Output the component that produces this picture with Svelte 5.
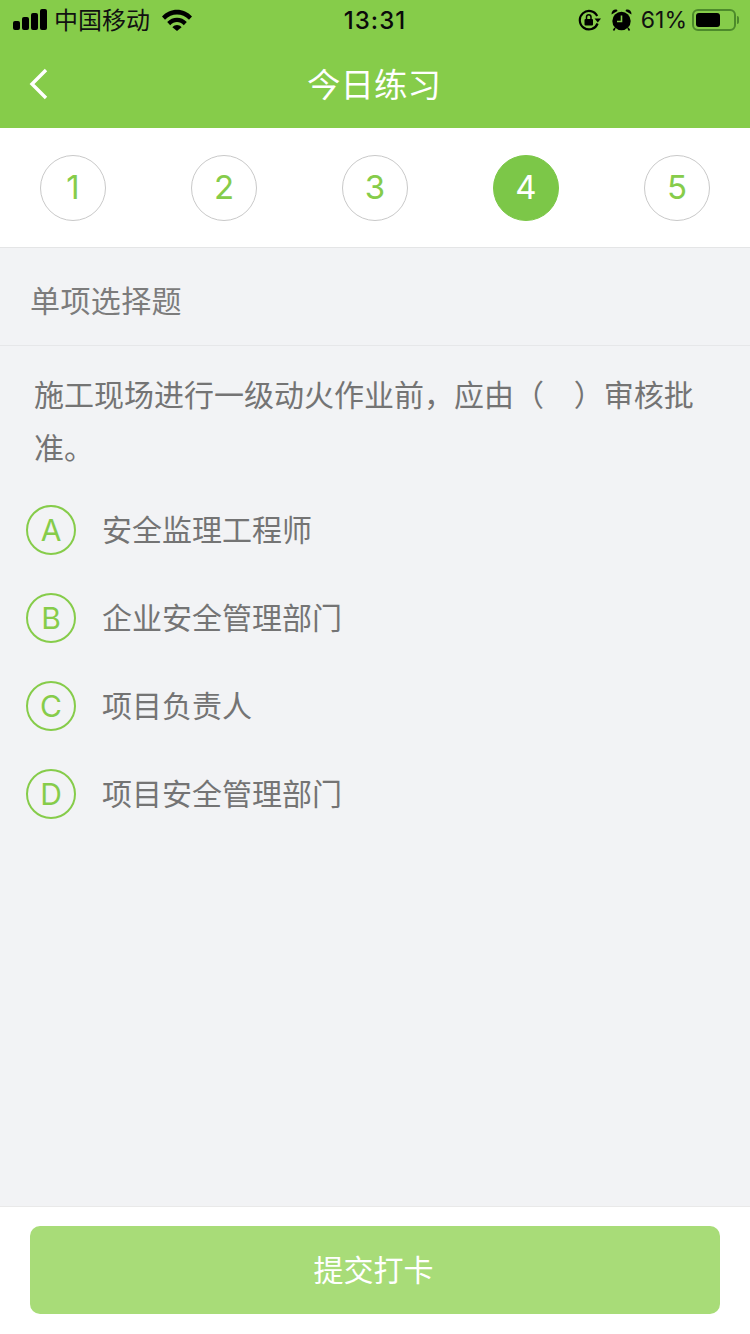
<script>
  const steps = [1, 2, 3, 4, 5];
  const current = 4;
  const options = [
    { key: 'A', text: '安全监理工程师' },
    { key: 'B', text: '企业安全管理部门' },
    { key: 'C', text: '项目负责人' },
    { key: 'D', text: '项目安全管理部门' }
  ];
</script>

<div class="page">
  <header class="header">
    <div class="status">
      <div class="status-left">
        <div class="signal">
          <i style="height: 9px"></i>
          <i style="height: 13px"></i>
          <i style="height: 17px"></i>
          <i style="height: 21px"></i>
        </div>
        <span class="carrier">中国移动</span>
        <svg class="wifi" width="30" height="22" viewBox="0 0 30 22">
          <path d="M0 7.5C8 -1.5 22 -1.5 30 7.5L27 10.8C20.5 3.6 9.5 3.6 3 10.8Z" fill="#000" />
          <path d="M5.2 13C10.5 7.2 19.5 7.2 24.8 13L21.8 16.2C17.8 12 12.2 12 8.2 16.2Z" fill="#000" />
          <path d="M10.4 18.2C13 15.4 17 15.4 19.6 18.2L15 22Z" fill="#000" />
        </svg>
      </div>
      <span class="time">13:31</span>
      <div class="status-right">
        <svg width="23" height="22" viewBox="0 0 23 22">
          <path d="M19.2 7A9.2 9.2 0 1 0 19.6 14.5" fill="none" stroke="#000" stroke-width="2.2" />
          <path d="M16.5 9.5H23L19.8 13.5Z" fill="#000" />
          <rect x="6.5" y="10" width="8.5" height="6.5" rx="1" fill="#000" />
          <path d="M8.5 10V8a2.2 2.2 0 0 1 4.5 0V10" fill="none" stroke="#000" stroke-width="1.5" />
        </svg>
        <svg class="alarm" width="21" height="22" viewBox="0 0 21 22">
          <circle cx="10.5" cy="12" r="9.2" fill="#000" />
          <path d="M10.5 6.5V12.5H6" fill="none" stroke="#86cc4a" stroke-width="1.6" />
          <path d="M0.5 5.5C0.5 2 3 0 6 0.8L6.5 2Z" fill="#000" />
          <path d="M20.5 5.5C20.5 2 18 0 15 0.8L14.5 2Z" fill="#000" />
          <path d="M4 19L2.5 21.5M17 19L18.5 21.5" stroke="#000" stroke-width="1.6" />
        </svg>
        <span class="percent">61%</span>
        <div class="battery">
          <div class="battery-body"><div class="battery-level"></div></div>
          <div class="battery-cap"></div>
        </div>
      </div>
    </div>
    <div class="nav">
      <svg class="back" width="20" height="32" viewBox="0 0 20 32">
        <path d="M17 2L3 16L17 30" fill="none" stroke="#fff" stroke-width="3.4" />
      </svg>
      <h1 class="title">今日练习</h1>
    </div>
  </header>

  <div class="steps">
    {#each steps as step}
      <div class="step" class:active={step === current}>{step}</div>
    {/each}
  </div>

  <main class="content">
    <div class="type">单项选择题</div>
    <p class="question">施工现场进行一级动火作业前，应由（&nbsp;&nbsp;&nbsp;）审核批准。</p>
    <ul class="options">
      {#each options as option}
        <li class="option">
          <span class="key">{option.key}</span>
          <span class="text">{option.text}</span>
        </li>
      {/each}
    </ul>
  </main>

  <footer class="footer">
    <button class="submit">提交打卡</button>
  </footer>
</div>

<style>
  :global(body) {
    margin: 0;
  }

  .page {
    width: 750px;
    height: 1334px;
    display: flex;
    flex-direction: column;
    background: #f2f3f5;
    font-family: 'Inter', 'Noto Sans CJK SC', sans-serif;
    overflow: hidden;
  }

  .header {
    height: 128px;
    background: #86cc4a;
    flex: none;
  }

  .status {
    height: 40px;
    display: flex;
    align-items: center;
    justify-content: space-between;
    padding: 0 11px 0 13px;
    position: relative;
    color: #000;
  }

  .status-left,
  .status-right {
    display: flex;
    align-items: center;
  }

  .signal {
    display: flex;
    align-items: flex-end;
    gap: 2px;
    height: 21px;
    margin-top: -1px;
  }

  .signal i {
    display: block;
    width: 7px;
    background: #000;
    border-radius: 2px;
  }

  .carrier {
    font-size: 24px;
    margin-left: 7px;
    padding-bottom: 4px;
    color: #111;
  }

  .wifi {
    margin-left: 12px;
  }

  .time {
    position: absolute;
    left: 0;
    right: 0;
    text-align: center;
    font-size: 24px;
    font-weight: 500;
    letter-spacing: 1px;
    color: #0a0a0a;
    pointer-events: none;
  }

  .alarm {
    margin-left: 10px;
  }

  .percent {
    font-size: 23px;
    margin-left: 9px;
    color: #111;
  }

  .battery {
    display: flex;
    align-items: center;
    margin-left: 5px;
  }

  .battery-body {
    box-sizing: border-box;
    width: 44px;
    height: 22px;
    border: 2px solid #4d8a2b;
    border-radius: 6px;
    padding: 2px;
  }

  .battery-level {
    width: 24px;
    height: 100%;
    background: #000;
    border-radius: 3px;
  }

  .battery-cap {
    width: 2px;
    height: 8px;
    margin-left: 1px;
    background: #4d8a2b;
    border-radius: 0 2px 2px 0;
  }

  .nav {
    height: 88px;
    display: flex;
    align-items: center;
    justify-content: center;
    position: relative;
  }

  .back {
    position: absolute;
    left: 29px;
    top: 28px;
  }

  .title {
    margin: 0 2px 4px 0;
    font-size: 33.5px;
    font-weight: 400;
    color: #fff;
  }

  .steps {
    height: 120px;
    flex: none;
    box-sizing: border-box;
    background: #fff;
    border-bottom: 1px solid #e4e5e6;
    padding: 27px 40px 0;
    display: flex;
    justify-content: space-between;
    align-items: flex-start;
  }

  .step {
    width: 66px;
    height: 66px;
    box-sizing: border-box;
    border: 1px solid #c9c9c9;
    border-radius: 50%;
    padding-bottom: 2px;
    display: flex;
    align-items: center;
    justify-content: center;
    font-size: 33px;
    color: #86cc4a;
  }

  .step.active {
    background: #7cc748;
    border-color: #7cc748;
    color: #fff;
  }

  .content {
    flex: 1;
  }

  .type {
    height: 98px;
    box-sizing: border-box;
    border-bottom: 1px solid #e6e7e9;
    padding: 4px 30px 0;
    display: flex;
    align-items: center;
    font-size: 30px;
    letter-spacing: 0.4px;
    color: #7c7c7c;
  }

  .question {
    margin: 0;
    padding: 23px 34px 0;
    font-size: 30px;
    line-height: 53px;
    word-spacing: 1.5px;
    color: #747474;
  }

  .options {
    list-style: none;
    margin: 0;
    padding: 11px 26px 0;
  }

  .option {
    height: 88px;
    display: flex;
    align-items: center;
  }

  .key {
    width: 50px;
    height: 50px;
    box-sizing: border-box;
    border: 2px solid #86cc4a;
    border-radius: 50%;
    display: flex;
    align-items: center;
    justify-content: center;
    font-size: 30px;
    color: #86cc4a;
  }

  .text {
    margin-left: 26px;
    padding-bottom: 4px;
    font-size: 30px;
    color: #747474;
  }

  .footer {
    height: 128px;
    flex: none;
    box-sizing: border-box;
    background: #fff;
    border-top: 1px solid #e9e9e9;
    padding: 19px 30px 0;
  }

  .submit {
    display: block;
    width: 100%;
    height: 88px;
    border: none;
    border-radius: 10px;
    background: #a8dc78;
    color: #fff;
    font-family: inherit;
    font-size: 30px;
    padding: 0 3px 4px 0;
  }
</style>
